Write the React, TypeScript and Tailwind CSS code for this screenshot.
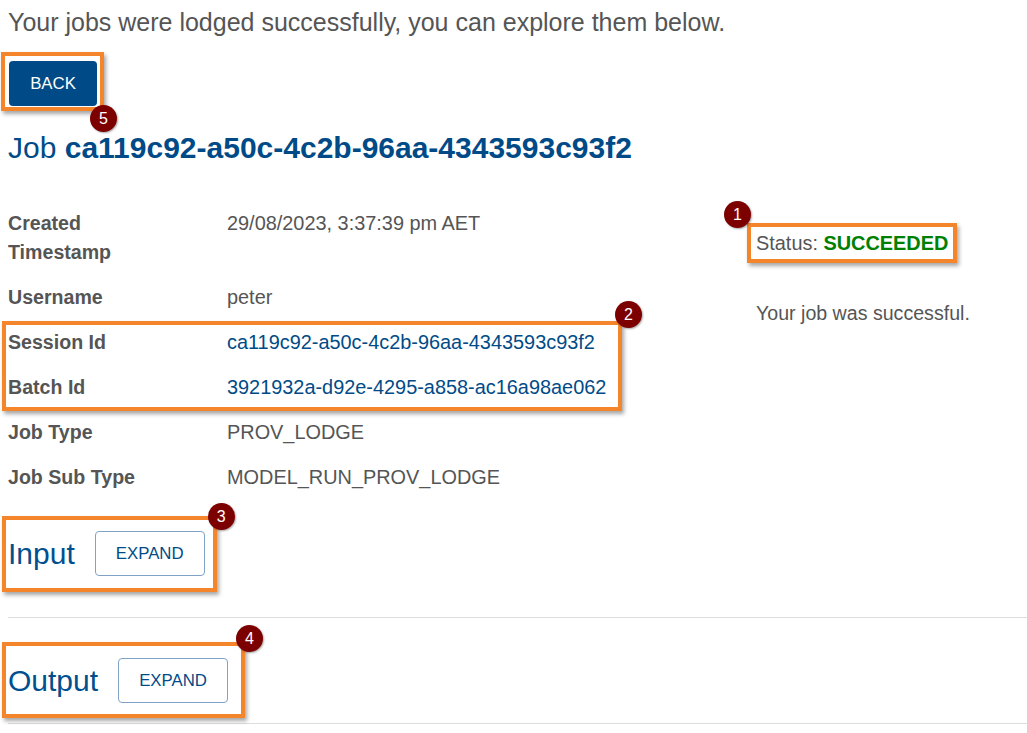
import React from 'react';

const rows: { label: string; value: string; link?: boolean }[] = [
  { label: 'Created Timestamp', value: '29/08/2023, 3:37:39 pm AET' },
  { label: 'Username', value: 'peter' },
  { label: 'Session Id', value: 'ca119c92-a50c-4c2b-96aa-4343593c93f2', link: true },
  { label: 'Batch Id', value: '3921932a-d92e-4295-a858-ac16a98ae062', link: true },
  { label: 'Job Type', value: 'PROV_LODGE' },
  { label: 'Job Sub Type', value: 'MODEL_RUN_PROV_LODGE' },
];

const Badge = ({ n, className }: { n: number; className: string }) => (
  <span
    className={`absolute z-20 flex h-[27px] w-[27px] items-center justify-center rounded-full bg-[#7d0000] text-[16px] leading-none text-white shadow-[1px_1px_2px_rgba(0,0,0,0.35)] ${className}`}
  >
    {n}
  </span>
);

const Row = ({ label, value, link }: { label: string; value: string; link?: boolean }) => (
  <div className="flex py-2 leading-[29px]">
    <div className="w-[219px] shrink-0 pr-[40px] font-bold text-[#555]">{label}</div>
    <div className={link ? 'text-[19.9px] text-[#004b87]' : 'text-[19.9px] text-[#555]'}>{value}</div>
  </div>
);

const ExpandSection = ({ title, n, box, badge }: { title: string; n: number; box: string; badge: string }) => (
  <div className="relative inline-flex items-center gap-5">
    <span className="text-[30px] leading-[36px] text-[#00508f]">{title}</span>
    <button className="h-[45px] w-[110px] rounded-[4px] border border-[#7fa3c6] bg-white text-[16.8px] text-[#004b87]">
      EXPAND
    </button>
    <span className={`pointer-events-none absolute border-4 border-[#f5852a] shadow-[2px_3px_4px_rgba(0,0,0,0.35)] ${box}`} />
    <Badge n={n} className={badge} />
  </div>
);

export default function App() {
  return (
    <div className="min-h-[733px] bg-white pl-2 pt-[7px] font-['Liberation_Sans',Arial,sans-serif] text-[19.6px] text-[#555]">
      <p className="text-[25px] leading-[30px] text-[#555]">
        Your jobs were lodged successfully, you can explore them below.
      </p>

      <div className="relative mt-6 inline-block">
        <button className="ml-px h-[45px] w-[88px] rounded-[4px] bg-[#004b87] text-[16.8px] text-white">
          BACK
        </button>
        <span className="pointer-events-none absolute -top-[9px] -right-[7px] -bottom-[5px] -left-[7px] border-4 border-[#f5852a] shadow-[2px_3px_4px_rgba(0,0,0,0.35)]" />
        <Badge n={5} className="-right-[20px] -bottom-[26px]" />
      </div>

      <h3 className="mt-[24px] text-[30px] leading-[36px] text-[#004b87]">
        Job <span className="font-bold">ca119c92-a50c-4c2b-96aa-4343593c93f2</span>
      </h3>

      <div className="mt-[35px] flex">
        <div className="w-[740px] shrink-0">
          <Row {...rows[0]} />
          <Row {...rows[1]} />
          <div className="relative">
            <Row {...rows[2]} />
            <Row {...rows[3]} />
            <span className="pointer-events-none absolute top-[1px] -bottom-[1px] -left-[6px] w-[620px] border-4 border-[#f5852a] shadow-[2px_3px_4px_rgba(0,0,0,0.35)]" />
            <Badge n={2} className="-top-[19px] left-[607px]" />
          </div>
          <Row {...rows[4]} />
          <Row {...rows[5]} />
        </div>

        <div className="flex-1 pt-[28px] pl-2 leading-[28px]">
          <div className="relative inline-block text-[19.9px]">
            Status: <span className="font-bold text-[#008000]">SUCCEEDED</span>
            <span className="pointer-events-none absolute -top-[6px] -right-[9px] -bottom-[6px] -left-[9px] border-4 border-[#f5852a] shadow-[2px_3px_4px_rgba(0,0,0,0.35)]" />
            <Badge n={1} className="-top-[28px] -left-[32px]" />
          </div>
          <p className="mt-[42px]">Your job was successful.</p>
        </div>
      </div>

      <div className="mt-[31px]">
        <ExpandSection
          title="Input"
          n={3}
          box="-top-[15px] -right-[12px] -bottom-[16px] -left-[6px]"
          badge="-top-[28px] -right-[30px]"
        />
      </div>

      <hr className="mt-[41px] border-t border-[#ddd]" />

      <div className="mt-[40px]">
        <ExpandSection
          title="Output"
          n={4}
          box="-top-[16px] -right-[17px] -bottom-[15px] -left-[6px]"
          badge="-top-[33px] -right-[35px]"
        />
      </div>

      <hr className="mt-[20px] border-t border-[#ddd]" />
    </div>
  );
}
